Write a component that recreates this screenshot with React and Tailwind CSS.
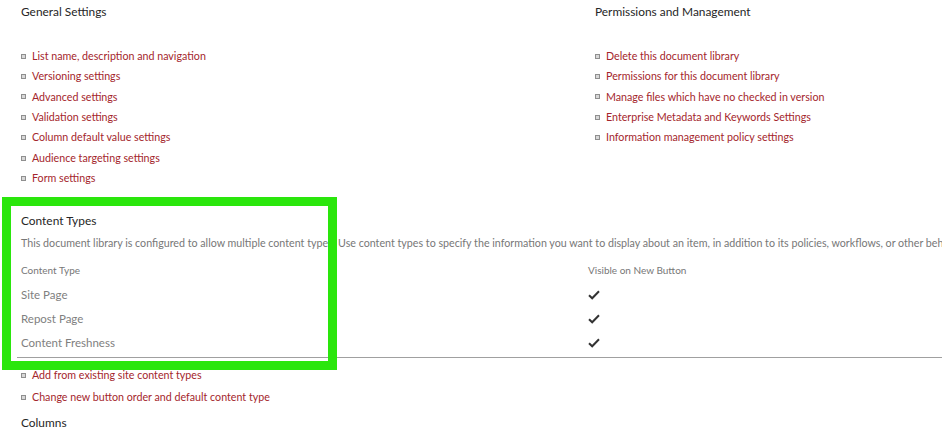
import React from "react";

const general = [
  "List name, description and navigation",
  "Versioning settings",
  "Advanced settings",
  "Validation settings",
  "Column default value settings",
  "Audience targeting settings",
  "Form settings",
];

const permissions = [
  "Delete this document library",
  "Permissions for this document library",
  "Manage files which have no checked in version",
  "Enterprise Metadata and Keywords Settings",
  "Information management policy settings",
];

const contentTypes = ["Site Page", "Repost Page", "Content Freshness"];

function Bullet() {
  return <span className="inline-block w-[5px] h-[5px] border border-[#8f8f8f] bg-[#d8d8d8] shrink-0" />;
}

function LinkItem({ label, h = "h-[20.4px]" }) {
  return (
    <li className={"flex items-center gap-[6px] " + h}>
      <Bullet />
      <a className="text-[#a4262c] text-[10.7px] leading-none">{label}</a>
    </li>
  );
}

function Check() {
  return (
    <svg width="12" height="10" viewBox="0 0 12 10">
      <path d="M1 5.2 L4.2 8.3 L11 1.3" fill="none" stroke="#333" strokeWidth="2" />
    </svg>
  );
}

export default function App() {
  return (
    <div
      className="relative w-[942px] h-[434px] overflow-hidden bg-white whitespace-nowrap"
      style={{ fontFamily: 'Lato, "Open Sans", sans-serif' }}
    >
      <div className="flex pt-[4px]">
        <div className="w-[574px] pl-[21px]">
          <h2 className="text-[11.9px] text-[#262626] h-[16px] leading-[16px]">General Settings</h2>
          <ul className="mt-[26px]">
            {general.map((g) => (
              <LinkItem key={g} label={g} />
            ))}
          </ul>
        </div>
        <div className="pl-[21px]">
          <h2 className="text-[11.9px] text-[#262626] h-[16px] leading-[16px]">Permissions and Management</h2>
          <ul className="mt-[26px]">
            {permissions.map((p) => (
              <LinkItem key={p} label={p} />
            ))}
          </ul>
        </div>
      </div>

      <div className="pl-[21px] mt-[24px]">
        <h2 className="text-[11.9px] text-[#262626] h-[16px] leading-[16px]">Content Types</h2>
        <p className="text-[10.7px] text-[#777] mt-[7px] leading-[14px]">
          This document library is configured to allow multiple content types. Use content types to specify the information you want to display about an item, in addition to its policies, workflows, or other behavior.
        </p>
      </div>

      <div className="ml-[17px] mt-[12px] border-b border-[#a0a0a0] pb-[2px]">
        <div className="flex h-[18px] items-center text-[10px] text-[#777]">
          <div className="w-[571px] pl-[4px]">Content Type</div>
          <div>Visible on New Button</div>
        </div>
        <div className="mt-[3px]">
          {contentTypes.map((c) => (
            <div key={c} className="flex h-[24px] items-center text-[11.5px] text-[#808080]">
              <div className="w-[571px] pl-[4px]">{c}</div>
              <div><Check /></div>
            </div>
          ))}
        </div>
      </div>

      <ul className="pl-[21px] mt-[7px]">
        <LinkItem label="Add from existing site content types" h="h-[22px]" />
        <LinkItem label="Change new button order and default content type" h="h-[22px]" />
      </ul>
      <h2 className="pl-[21px] mt-[6px] text-[11.9px] text-[#262626] h-[16px] leading-[16px]">Columns</h2>

      <div className="absolute left-[2px] top-[197px] w-[335px] h-[173px] border-[9px] border-[#2ae60c]" />
    </div>
  );
}
